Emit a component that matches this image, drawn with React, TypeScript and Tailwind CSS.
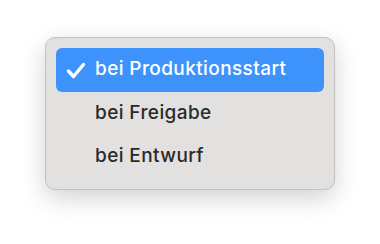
import React from "react";

const items = ["bei Produktionsstart", "bei Freigabe", "bei Entwurf"];

export default function App() {
  return (
    <div className="w-[380px] h-[244px] bg-white pt-[37px] pl-[45px]" style={{ fontFamily: "Inter, 'Liberation Sans', sans-serif" }}>
      <div className="w-[290px] h-[153px] rounded-[10px] bg-[#e3e1df] border border-[#c4c2c0] shadow-[0_8px_24px_rgba(0,0,0,0.18)] px-[10px] pt-[10px]">
        {items.map((label, i) => (
          <div
            key={label}
            className={
              i === 0
                ? "h-[44px] rounded-[6px] bg-[#3d93fb] text-white flex items-center"
                : i === 1
                ? "h-[44px] text-[#2a2a2a] flex items-center"
                : "h-[42px] text-[#2a2a2a] flex items-center"
            }
          >
            <div className="w-[39px] flex justify-end pr-[9px]">
              {i === 0 && (
                <svg width="20" height="17" viewBox="0 0 20 17">
                  <path d="M2.5 9 L7.5 14.5 L17.5 2.5" fill="none" stroke="white" strokeWidth="3.4" strokeLinecap="round" strokeLinejoin="round" />
                </svg>
              )}
            </div>
            <span className="text-[19px] leading-none font-medium tracking-[0.4px] pb-[4px]">{label}</span>
          </div>
        ))}
      </div>
    </div>
  );
}
